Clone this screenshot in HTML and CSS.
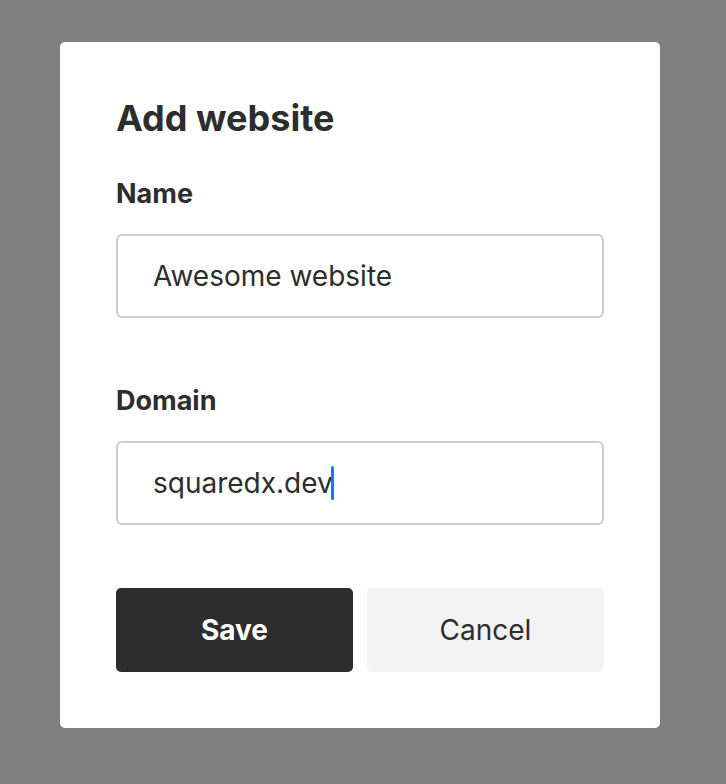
FILE: index.html
```html
<!DOCTYPE html>
<html lang="en">
<head>
    <meta charset="UTF-8">
    <title>Add website</title>
    <link rel="stylesheet" href="styles.css">
</head>
<body>
    <!-- modal dialog -->
    <div class="modal">
        <h1 class="modal-title">Add website</h1>

        <div class="field">
            <label class="field-label">Name</label>
            <div class="field-input">Awesome website</div>
        </div>

        <div class="field">
            <label class="field-label">Domain</label>
            <div class="field-input">squaredx.dev<span class="caret"></span></div>
        </div>

        <div class="actions">
            <button class="btn btn-save">Save</button>
            <button class="btn btn-cancel">Cancel</button>
        </div>
    </div>
</body>
</html>
```

FILE: styles.css
```css
body {
    margin: 0;
    height: 784px;
    background-color: #808080;
    font-family: Inter, "Noto Sans", sans-serif;
    color: #2d2d2d;
}

.modal {
    width: 600px;
    margin: 42px 0 0 60px;
    padding: 54px 56px 56px 56px;
    box-sizing: border-box;
    background-color: #fff;
    border-radius: 5px;
}

.modal-title {
    margin: 0;
    font-size: 36px;
    line-height: 44px;
    font-weight: 700;
}

.field {
    margin-top: 38px;
}

.field + .field {
    margin-top: 67px;
}

.field-label {
    display: block;
    font-size: 27px;
    line-height: 32px;
    font-weight: 700;
}

.field-input {
    margin-top: 24px;
    height: 84px;
    box-sizing: border-box;
    padding: 0 35px;
    display: flex;
    align-items: center;
    border: 2px solid #cccccc;
    border-radius: 6px;
    font-size: 28px;
}

.caret {
    display: inline-block;
    width: 3px;
    height: 34px;
    margin-left: -2px;
    border-radius: 2px;
    background-color: #0a7aff;
}

.actions {
    display: flex;
    gap: 14px;
    margin-top: 63px;
}

.btn {
    flex: 1;
    height: 84px;
    border: 0;
    border-radius: 5px;
    font-family: inherit;
    font-size: 28px;
    cursor: pointer;
}

.btn-save {
    background-color: #2d2d2d;
    color: #fff;
    font-weight: 700;
}

.btn-cancel {
    background-color: #f3f3f3;
    color: #2d2d2d;
}
```
